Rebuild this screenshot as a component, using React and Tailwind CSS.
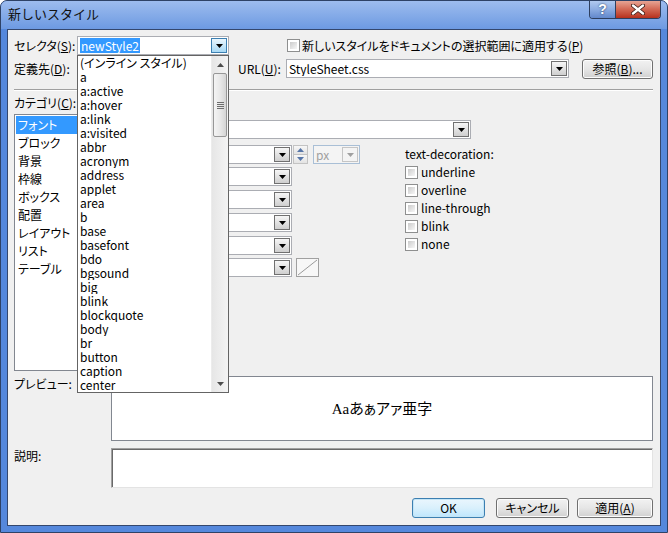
import React from "react";

function Arrow({ color = "#000", up = false }) {
  return (
    <svg width="7" height="4" viewBox="0 0 7 4">
      <path d={up ? "M0 4H7L3.5 0Z" : "M0 0H7L3.5 4Z"} fill={color} />
    </svg>
  );
}

function DropBtn({ disabled, focused }) {
  const cls = focused
    ? "border-[#3c7fb1] bg-linear-to-b from-[#eaf6fd] to-[#a7d9f5]"
    : disabled
    ? "border-[#c5c5c5] bg-[#f4f4f4]"
    : "border-[#707070] bg-linear-to-b from-[#f6f6f6] to-[#cfcfcf]";
  return (
    <div className={`w-[16px] h-[15px] mr-[1px] shrink-0 flex items-center justify-center border ${cls}`}>
      <Arrow color={disabled ? "#a0a0a0" : "#000"} />
    </div>
  );
}

function Combo({ className = "", children, disabled, focused }) {
  return (
    <div
      className={`h-[19px] shrink-0 flex items-center border ${
        disabled ? "border-[#a9bfd6] bg-[#f4f4f4]" : "border-[#abadb3] bg-white"
      } ${className}`}
    >
      <div className="flex-1 min-w-0 overflow-hidden whitespace-nowrap pl-[2px] leading-[15px]">{children}</div>
      <DropBtn disabled={disabled} focused={focused} />
    </div>
  );
}

function Check() {
  return (
    <div className="w-[13px] h-[13px] shrink-0 border border-[#8e8f8f] bg-white p-[2px]">
      <div className="w-full h-full bg-linear-to-br from-[#cbcbcb] to-[#f7f7f7]" />
    </div>
  );
}

function Btn({ className = "", children, primary }) {
  return (
    <div
      className={`h-[20px] shrink-0 flex items-center justify-center rounded-[3px] border ${
        primary
          ? "border-[#3c7fb1] bg-linear-to-b from-[#eaf6fd] via-[#d9f0fc] to-[#bee6fd] shadow-[inset_0_0_0_1px_#c4e5f6]"
          : "border-[#707070] bg-linear-to-b from-[#f2f2f2] via-[#e6e6e6] to-[#d0d0d0] shadow-[inset_0_0_0_1px_#fcfcfc]"
      } ${className}`}
    >
      {children}
    </div>
  );
}

const U = ({ children }) => <span className="underline underline-offset-[1px]">{children}</span>;

const dropItems = [
  "(インライン スタイル)",
  "a",
  "a:active",
  "a:hover",
  "a:link",
  "a:visited",
  "abbr",
  "acronym",
  "address",
  "applet",
  "area",
  "b",
  "base",
  "basefont",
  "bdo",
  "bgsound",
  "big",
  "blink",
  "blockquote",
  "body",
  "br",
  "button",
  "caption",
  "center",
];

const categories = ["フォント", "ブロック", "背景", "枠線", "ボックス", "配置", "レイアウト", "リスト", "テーブル"];

const decos = ["underline", "overline", "line-through", "blink", "none"];

function Frame({ children }) {
  return (
    <div className="w-[668px] h-[533px] flex flex-col rounded-t-[7px] border border-[#2e4266] bg-[#5588dc] overflow-hidden">
      {children}
    </div>
  );
}

export default function App() {
  return (
    <div className="font-['Noto_Sans_CJK_JP','Liberation_Sans',sans-serif] text-[12px] text-black [font-feature-settings:'palt']">
      <Frame>
        {/* title bar */}
        <div className="h-[28px] shrink-0 flex justify-between pl-[7px] pr-[6px] bg-linear-to-b from-[#9dbcee] to-[#6d9ae2]">
          <div className="pt-[5px] leading-[16px] text-[13px] [font-feature-settings:normal] text-[#111]">
            新しいスタイル
          </div>
          <div className="flex -mt-[1px] h-[19px] rounded-b-[4px] border border-t-0 border-[#2e3f5f] overflow-hidden">
            <div className="w-[26px] flex items-center justify-center bg-linear-to-b from-[#b6cdf1] via-[#8eaee2] to-[#6288cc] border-r border-[#2e3f5f] text-white font-bold text-[14px] leading-[14px] [text-shadow:0_0_2px_#1d2f52] font-['Liberation_Sans',sans-serif]">
              ?
            </div>
            <div className="w-[44px] flex items-center justify-center bg-linear-to-b from-[#e8ab9c] via-[#d36a56] to-[#b62f1c]">
              <svg width="14" height="11" viewBox="0 0 14 11">
                <path d="M2 1.5L12 9.5M12 1.5L2 9.5" stroke="#3b1a14" strokeWidth="4" strokeLinecap="round" />
                <path d="M2 1.5L12 9.5M12 1.5L2 9.5" stroke="#ffffff" strokeWidth="2.4" strokeLinecap="round" />
              </svg>
            </div>
          </div>
        </div>

        {/* client */}
        <div className="flex-1 mx-[6px] mb-[6px] border border-[#34476d] bg-[#f0f0f0] relative flex flex-col pt-[6px] pl-[6px] pr-[7px]">
          {/* row 1 */}
          <div className="h-[19px] flex items-center shrink-0">
            <div className="w-[63px] leading-[14px]">
              セレクタ(<U>S</U>):
            </div>
            <Combo className="w-[152px]" focused>
              <span className="bg-[#3399ff] text-white px-[1px] inline-block leading-[15px]">newStyle2</span>
            </Combo>
            <div className="ml-[58px] flex items-center">
              <Check />
              <span className="ml-[2px] leading-[14px]">
                新しいスタイルをドキュメントの選択範囲に適用する(<U>P</U>)
              </span>
            </div>
          </div>

          {/* row 2 */}
          <div className="mt-[4px] h-[19px] flex items-center shrink-0">
            <div className="w-[63px] leading-[14px]">
              定義先(<U>D</U>):
            </div>
            <Combo className="w-[152px]">既存のスタイル シート</Combo>
            <div className="ml-[9px] w-[48px] leading-[14px]">
              URL(<U>U</U>):
            </div>
            <Combo className="w-[283px]">StyleSheet.css</Combo>
            <Btn className="ml-[13px] w-[71px]">
              参照(<U>B</U>)...
            </Btn>
          </div>

          {/* separator */}
          <div className="mt-[11px] h-[2px] shrink-0 border-t border-[#a0a0a0] border-b border-b-white" />

          <div className="mt-[5px] h-[14px] leading-[14px] shrink-0">
            カテゴリ(<U>C</U>):
          </div>

          {/* main */}
          <div className="mt-[4px] h-[257px] flex shrink-0">
            <div className="w-[98px] h-full border border-[#828790] bg-white pt-[1px] px-[1px] shrink-0">
              {categories.map((c, i) => (
                <div
                  key={c}
                  className={`h-[18px] leading-[18px] pl-[2px] ${i === 0 ? "bg-[#3399ff] text-white" : ""}`}
                >
                  {c}
                </div>
              ))}
            </div>
            <div className="flex-1 pt-[6px] flex flex-col">
              <div className="h-[19px] flex items-center">
                <div className="w-[88px] pl-[8px] leading-[14px]">font-family:</div>
                <Combo className="w-[271px]" />
              </div>
              <div className="flex mt-[6px]">
                <div className="w-[293px] flex flex-col">
                  <div className="h-[19px] flex items-center">
                    <div className="w-[88px] pl-[8px] leading-[14px]">font-size:</div>
                    <Combo className="w-[92px]" />
                    <div className="ml-[1px] w-[15px] h-[19px] flex flex-col border border-[#c3c3c3]">
                      <div className="flex-1 flex items-center justify-center bg-linear-to-b from-[#f7f7f7] to-[#e3e3e3] border-b border-[#c3c3c3]">
                        <Arrow color="#5776a8" up />
                      </div>
                      <div className="flex-1 flex items-center justify-center bg-linear-to-b from-[#f7f7f7] to-[#e3e3e3]">
                        <Arrow color="#5776a8" />
                      </div>
                    </div>
                    <Combo className="ml-[5px] w-[47px]" disabled>
                      <span className="text-[#a0a0a0]">px</span>
                    </Combo>
                  </div>
                  <div className="mt-[3px] h-[19px] flex items-center">
                    <div className="w-[88px] pl-[8px] leading-[14px]">font-weight:</div>
                    <Combo className="w-[92px]" />
                  </div>
                  <div className="mt-[4px] h-[19px] flex items-center">
                    <div className="w-[88px] pl-[8px] leading-[14px]">font-style:</div>
                    <Combo className="w-[92px]" />
                  </div>
                  <div className="mt-[4px] h-[19px] flex items-center">
                    <div className="w-[88px] pl-[8px] leading-[14px]">font-variant:</div>
                    <Combo className="w-[92px]" />
                  </div>
                  <div className="mt-[4px] h-[19px] flex items-center">
                    <div className="w-[88px] pl-[8px] leading-[14px]">text-transform:</div>
                    <Combo className="w-[92px]" />
                  </div>
                  <div className="mt-[3px] h-[19px] flex items-center">
                    <div className="w-[88px] pl-[8px] leading-[14px]">color:</div>
                    <Combo className="w-[92px]" />
                    <div className="ml-[4px] w-[23px] h-[19px] border border-[#a0a0a0] bg-[#f7f7f7]">
                      <svg width="21" height="17" viewBox="0 0 21 17">
                        <path d="M1 16L20 1" stroke="#9a9a9a" strokeWidth="1" />
                      </svg>
                    </div>
                  </div>
                </div>
                <div className="flex flex-col">
                  <div className="h-[18px] pt-[2px] leading-[14px]">text-decoration:</div>
                  {decos.map((d) => (
                    <div key={d} className="h-[18px] flex items-center">
                      <Check />
                      <span className="ml-[3px] leading-[14px]">{d}</span>
                    </div>
                  ))}
                </div>
              </div>
            </div>
          </div>

          {/* preview */}
          <div className="mt-[5px] h-[65px] flex shrink-0">
            <div className="w-[97px] pt-[1px] leading-[14px]">プレビュー:</div>
            <div className="flex-1 border border-[#828790] bg-white flex items-center justify-center">
              <span className="text-[15px] leading-[18px] font-['Liberation_Serif','Noto_Sans_CJK_JP',serif]">
                Aaあぁアァ亜字
              </span>
            </div>
          </div>

          {/* description */}
          <div className="mt-[7px] h-[40px] flex shrink-0">
            <div className="w-[97px] pt-[1px] leading-[14px]">説明:</div>
            <div className="flex-1 border border-t-[#a0a0a0] border-l-[#a0a0a0] border-r-[#e3e3e3] border-b-[#e3e3e3] bg-white shadow-[inset_1px_1px_0_#696969]" />
          </div>

          {/* buttons */}
          <div className="mt-[10px] h-[20px] flex justify-end shrink-0">
            <Btn className="w-[73px]" primary>
              OK
            </Btn>
            <Btn className="ml-[11px] w-[73px]">キャンセル</Btn>
            <Btn className="ml-[8px] w-[76px]">
              適用(<U>A</U>)
            </Btn>
          </div>

          {/* dropdown list overlay */}
          <div className="absolute left-[69px] top-[25px] w-[152px] h-[338px] border border-[#646464] bg-white z-10">
            <div className="pr-[17px]">
              {dropItems.map((it) => (
                <div key={it} className="h-[14px] leading-[14px] pl-[2px] whitespace-nowrap overflow-hidden">
                  {it}
                </div>
              ))}
            </div>
            <div className="absolute right-0 top-0 bottom-0 w-[17px] bg-linear-to-r from-[#e6e6e6] to-[#f4f4f4] border-l border-[#ececec] flex flex-col">
              <div className="h-[17px] flex items-center justify-center">
                <Arrow color="#4d4d4d" up />
              </div>
              <div className="h-[64px] mx-[1px] rounded-[2px] border border-[#979797] bg-linear-to-r from-[#f4f4f4] via-[#e8e8e8] to-[#d5d5d5] flex flex-col items-center justify-center gap-[1px]">
                <div className="w-[7px] h-[1px] bg-[#6d6d6d]" />
                <div className="w-[7px] h-[1px] bg-[#6d6d6d]" />
                <div className="w-[7px] h-[1px] bg-[#6d6d6d]" />
                <div className="w-[7px] h-[1px] bg-[#6d6d6d]" />
              </div>
              <div className="flex-1" />
              <div className="h-[17px] flex items-center justify-center">
                <Arrow color="#4d4d4d" />
              </div>
            </div>
          </div>
        </div>
      </Frame>
    </div>
  );
}
